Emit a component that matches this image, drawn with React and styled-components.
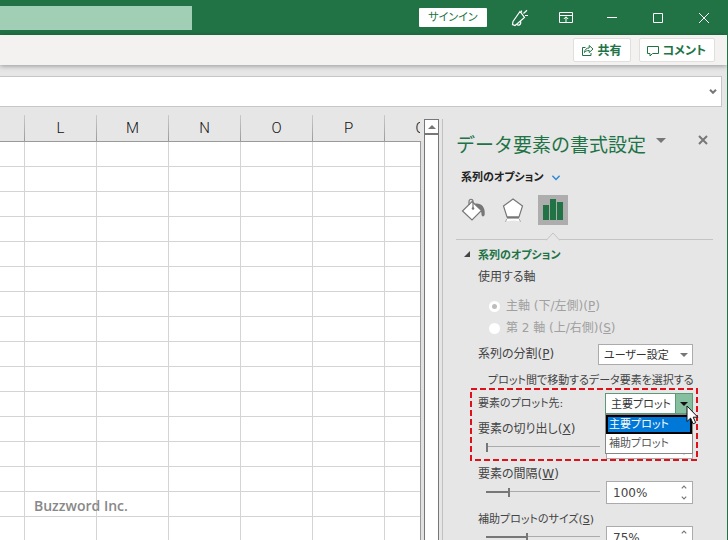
import React, { useState } from 'react'
import styled, { createGlobalStyle, css } from 'styled-components'

const green = '#217346'

const GlobalStyle = createGlobalStyle`
  * { box-sizing: border-box; }
  body {
    margin: 0;
    background: #e6e6e6;
    color: #444;
    font: 11px/20px "DejaVu Sans", "Noto Sans CJK JP", sans-serif;
    font-feature-settings: "palt";
  }
  button, input, select {
    font: inherit;
    font-feature-settings: inherit;
    color: inherit;
    margin: 0;
  }
  svg { display: block; }
`

const Window = styled.div`
  display: flex;
  flex-direction: column;
  height: 100vh;
  overflow: hidden;
  border-right: 1px solid ${green};
`

const TitleBar = styled.header`
  display: flex;
  flex: none;
  align-items: center;
  height: 35px;
  background: ${green};
`

const Search = styled.input`
  width: 192px;
  height: 24px;
  margin-right: auto;
  border: 0;
  background: #a0cfb5;
`

const SignIn = styled.button`
  width: 68px;
  height: 19px;
  margin-right: 10px;
  padding: 1px 0 0;
  border: 0;
  border-radius: 1px;
  background: #fff;
  color: ${green};
  line-height: 18px;
`

const TitleButton = styled.button`
  display: flex;
  align-items: center;
  justify-content: center;
  width: 46px;
  height: 35px;
  padding: 0;
  border: 0;
  background: none;
  color: #fff;
`

const Ribbon = styled.div`
  display: flex;
  flex: none;
  align-items: center;
  justify-content: flex-end;
  gap: 8px;
  height: 30px;
  padding-right: 12px;
  background: #f3f2f1;
  box-shadow: 0 1px 5px rgba(0, 0, 0, 0.35);
`

const RibbonButton = styled.button`
  display: flex;
  align-items: center;
  gap: 4px;
  height: 24px;
  padding: 1px 8px 0 7px;
  border: 1px solid #e1dfdd;
  border-radius: 2px;
  background: #fff;
  color: ${green};
  font-size: 12px;
  font-weight: 700;
`

const FormulaBar = styled.div`
  display: flex;
  flex: none;
  align-items: center;
  height: 31px;
  margin: 11px 5px 8px 0;
  padding-right: 4px;
  border: 1px solid #c6c6c6;
  border-left: 0;
  background: #fff;
`

const FormulaInput = styled.input`
  flex: 1;
  min-width: 0;
  border: 0;
  background: none;
`

const IconButton = styled.button`
  display: flex;
  padding: 0;
  border: 0;
  background: none;
`

const Workspace = styled.main`
  display: flex;
  flex: 1;
  min-height: 0;
`

const Sheet = styled.div`
  position: relative;
  flex: 1;
  min-width: 0;
  overflow: hidden;
`

const Grid = styled.table`
  width: 100%;
  table-layout: fixed;
  border-collapse: separate;
  border-spacing: 0;
  th {
    height: 27px;
    padding: 0;
    border-right: 1px solid;
    border-bottom: 1px solid #999;
    border-image: linear-gradient(#ccc, #999) 1;
    background: #e6e6e6;
    color: #111;
    font: 300 15px/26px Roboto, sans-serif;
  }
  td {
    height: 25px;
    padding: 0;
    border-right: 1px solid #d4d4d4;
    border-bottom: 1px solid #d4d4d4;
    background: #fff;
  }
`

const GridCol = styled.col`
  width: ${p => (p.$first ? 25 : 72)}px;
`

const SheetEdge = styled.div`
  width: 4px;
  margin-top: 26px;
  border-left: 1px solid #999;
  background: #e1e1e1;
`

const Watermark = styled.span`
  position: absolute;
  left: 34px;
  bottom: 24px;
  color: #888;
  font: 600 14px/20px "Open Sans", sans-serif;
`

const ScrollBar = styled.div`
  display: flex;
  flex-direction: column;
  width: 15px;
  margin: 4px 3px 0 0;
  border: 1px solid #777;
  border-bottom: 0;
  background: #fff;
`

const ScrollUp = styled.button`
  display: flex;
  align-items: center;
  justify-content: center;
  height: 15px;
  padding: 0;
  border: 0;
  border-bottom: 2px solid #777;
  background: #fff;
  color: #777;
`

const Pane = styled.aside`
  width: 285px;
  flex: none;
  margin-top: 4px;
  padding: 11px 14px 0 13px;
  border-left: 1px solid #c0c0c0;
`

const PaneHeader = styled.div`
  display: flex;
  height: 28px;
`

const PaneTitle = styled.h1`
  margin: 0 10px 0 0;
  color: ${green};
  font: 400 19px/28px "Noto Sans CJK JP", sans-serif;
  white-space: nowrap;
`

const PaneTools = styled.div`
  display: flex;
  flex: 1;
  align-items: center;
  justify-content: space-between;
  padding: 0 5px 8px 0;
  color: #777;
`

const OptionsMenu = styled.button`
  display: flex;
  align-items: center;
  gap: 7px;
  height: 20px;
  margin-top: 10px;
  padding: 0 0 0 5px;
  border: 0;
  background: none;
  color: #222;
  font-weight: 700;
`

const Tabs = styled.div`
  display: flex;
  gap: 10px;
  height: 44px;
  margin-top: 7px;
  padding-left: 2px;
`

const Tab = styled.button`
  display: flex;
  align-items: center;
  justify-content: center;
  width: 30px;
  height: 30px;
  padding: 0;
  border: 0;
  background: ${p => (p.$active ? '#adadad' : 'none')};
`

const Divider = styled.div`
  position: relative;
  border-top: 1px solid #c4c4c4;
  svg {
    position: absolute;
    left: 90px;
    top: -8px;
  }
`

const SectionTitle = styled.h2`
  display: flex;
  align-items: center;
  gap: 8px;
  margin: 6px 0 1px;
  padding-left: 8px;
  color: ${green};
  font-size: 11px;
  line-height: 20px;
  svg {
    margin-bottom: 4px;
  }
`

const Section = styled.section`
  padding: 0 20px 0 22px;
  white-space: nowrap;
`

const Fieldset = styled.fieldset`
  margin: 0 0 5px;
  padding: 0;
  border: 0;
  font-size: 12px;
  legend {
    padding: 0;
    margin-bottom: 8px;
  }
`

const Label = styled.label`
  font-size: ${p => (p.$small ? 11 : 12)}px;
  line-height: 21px;
`

const RadioLabel = styled.label`
  display: flex;
  align-items: center;
  gap: 6px;
  height: 22px;
  padding-left: 11px;
  color: #a0a0a0;
`

const Radio = styled.input`
  appearance: none;
  width: 11px;
  height: 11px;
  border: 3px solid #fff;
  border-radius: 50%;
  background: ${p => (p.defaultChecked ? '#bdbdbd' : '#fff')};
`

const Row = styled.div`
  position: relative;
  display: flex;
  align-items: center;
  justify-content: space-between;
  height: 21px;
`

const Hint = styled.p`
  margin: 6px 0 2px 10px;
`

const SelectBox = styled.span`
  display: grid;
  grid-template-columns: 1fr 17px;
  align-items: center;
  width: ${p => p.$width}px;
  height: 21px;
  border: 1px solid ${p => (p.$open ? '#5a9a78' : '#ababab')};
  background: #fff;
  select {
    grid-area: 1 / 1 / 2 / 3;
    appearance: none;
    height: 19px;
    padding: 1px 18px 0 5px;
    border: 0;
    background: none;
    color: #333;
    outline: 0;
  }
`

const SelectArrow = styled.span`
  grid-area: 1 / 2;
  display: flex;
  align-items: center;
  justify-content: center;
  height: 19px;
  pointer-events: none;
  color: #777;
  ${p => p.$open && css`
    border-left: 1px solid #5a9a78;
    background: #86bfa0;
    color: #111;
  `}
`

const Highlight = styled.div`
  position: relative;
`

const DashedFrame = styled.svg`
  position: absolute;
  left: -8px;
  top: -5px;
  z-index: 3;
  width: 228px;
  height: 73px;
  pointer-events: none;
`

const Menu = styled.ul`
  position: absolute;
  z-index: 1;
  top: 21px;
  right: 0;
  width: 88px;
  margin: 0;
  padding: 0;
  border: 1px solid #888;
  background: #fff;
  list-style: none;
`

const MenuItem = styled.li`
  height: 19px;
  padding: 0 1px;
  border: 2px solid ${p => (p['aria-selected'] ? '#000' : '#fff')};
  background: ${p => (p['aria-selected'] ? '#0078d7' : '#fff')};
  color: ${p => (p['aria-selected'] ? '#fff' : '#555')};
  line-height: 16px;
`

const Cursor = styled.svg`
  position: absolute;
  z-index: 4;
  top: 12px;
  right: -6px;
`

const Field = styled.div`
  display: flex;
  align-items: flex-end;
  justify-content: space-between;
  height: 45px;
`

const FieldMain = styled.div`
  display: flex;
  flex-direction: column;
  width: 122px;
  height: 40px;
`

const Slider = styled.input`
  appearance: none;
  width: 114px;
  height: 14px;
  margin-left: 8px;
  background:
    linear-gradient(#777, #777) 0 6px / ${p => p.$fill}% 2px no-repeat,
    linear-gradient(#ababab, #ababab) 0 6px / 100% 1px no-repeat;
  &::-webkit-slider-thumb {
    appearance: none;
    width: 2px;
    height: 9px;
    background: #777;
  }
`

const Spinner = styled.span`
  display: flex;
  width: 87px;
  height: 23px;
  border: 1px solid #ababab;
  background: #fff;
  input {
    flex: 1;
    min-width: 0;
    padding: 0 0 0 6px;
    border: 0;
    background: none;
    font-size: 12px;
  }
`

const SpinButtons = styled.span`
  display: flex;
  flex-direction: column;
  justify-content: space-between;
  padding: 3px 5px;
`

const Chevron = ({ size = 8, up, color = '#777', width = 1.5 }) => (
  <svg width={size} height={size / 2 + 1} viewBox="0 0 8 5" fill="none" stroke={color} strokeWidth={width}>
    <path d={up ? 'M1 4.3 4 1.2 7 4.3' : 'M1 .7 4 3.8 7 .7'} />
  </svg>
)

const Triangle = ({ size = 8, up }) => (
  <svg width={size} height={size / 2} viewBox="0 0 8 4" fill="currentColor">
    <path d={up ? 'M0 4 4 0 8 4z' : 'M0 0h8L4 4z'} />
  </svg>
)

const MegaphoneIcon = () => (
  <svg width="18" height="18" viewBox="0 0 18 18" fill="none" stroke="#fff" strokeWidth="1.2">
    <path d="M9 2.5 2 12.5 1.5 15.5 4 16.5 6.5 14.5 13.500 8.500zM6 15.2c1 1.800 4.500 1 3.600-2.800" />
    <path d="M10.500 3.500V1.500M12.500 4.500l3.500-3.300M14 6.500h3" />
  </svg>
)

const RibbonDisplayIcon = () => (
  <svg width="14" height="12" viewBox="0 0 14 12" fill="none" stroke="#fff">
    <path d="M.5.5h13v10H.5zM.5 3.5h13M7 10V5M4.8 7 7 4.8 9.2 7" />
  </svg>
)

const ShareIcon = () => (
  <svg width="13" height="13" viewBox="0 0 13 13" fill="none" stroke={green}>
    <path d="M4.500 3.500H1.500v8h8.500V9" />
    <path d="M3.500 8.500c.2-3 2-4.500 4.700-4.500V1.500l3.800 3.500-3.800 3.500V6.500C6 6.500 4.600 7 3.500 8.500z" />
  </svg>
)

const CommentIcon = () => (
  <svg width="12" height="12" viewBox="0 0 12 12" fill="none" stroke={green}>
    <path d="M.5 1.5h11v7H5.500L3 11V8.500H.5z" />
  </svg>
)

const BucketIcon = () => (
  <svg width="26" height="26" viewBox="0 0 26 26" fill="none">
    <path d="M15 6.500c6-.8 10.500 3 9.700 11-.5 2.500-3 2.500-3.200 0 .2-3-1.300-4-2.800-4z" fill="#777" />
    <path d="M12 4.500 21.500 13.500 12 23 2.500 14z" fill="#fff" stroke="#777" strokeWidth="1.2" />
    <path d="M9 8V4.500C9 1.500 13 1.500 13 4.500V11" stroke="#777" strokeWidth="1.2" />
    <circle cx="13" cy="11.5" r="1.3" fill="#777" />
  </svg>
)

const PentagonIcon = () => (
  <svg width="24" height="26" viewBox="0 0 24 26" fill="none">
    <path d="M12 2 21.500 9 18 20H6L2.500 9z" fill="#fff" stroke="#777" strokeWidth="1.2" />
    <path d="M6 20.500h12" stroke="#777" strokeWidth="2" />
    <path d="M5.5 22h13l1 3c-3-2-12-2-15 0z" fill="#fff" />
    <path d="M5.7 22 4.5 25M18.3 22l1.2 3" stroke="#aaa" />
  </svg>
)

const BarsIcon = () => (
  <svg width="20" height="22" viewBox="0 0 20 22" fill={green}>
    <path d="M0 6h6v15H0zM7 0h6v21H7zM14 3h6v18h-6z" />
  </svg>
)

const SliderField = ({ id, label, accessKey, min, max, initial, small }) => {
  const [value, setValue] = useState(initial)
  return (
    <Field>
      <FieldMain>
        <Label htmlFor={id} $small={small}>{label}(<u>{accessKey}</u>)</Label>
        <Slider
          id={id}
          type="range"
          min={min}
          max={max}
          value={value}
          $fill={(value - min) / (max - min) * 100}
          onChange={e => setValue(Number(e.target.value))}
        />
      </FieldMain>
      <Spinner>
        <input aria-label={label} value={value + '%'} onChange={e => setValue(parseInt(e.target.value, 10) || min)} />
        <SpinButtons>
          <IconButton aria-label="増やす" onClick={() => setValue(Math.min(max, value + 1))}><Chevron size={6} up /></IconButton>
          <IconButton aria-label="減らす" onClick={() => setValue(Math.max(min, value - 1))}><Chevron size={6} /></IconButton>
        </SpinButtons>
      </Spinner>
    </Field>
  )
}

const columns = ['', 'L', 'M', 'N', 'O', 'P', 'Q']
const rows = Array.from({ length: 40 }, (_, i) => i)
const plots = ['主要プロット', '補助プロット']

export default () => {
  const [plot, setPlot] = useState(plots[0])
  return (
    <Window>
      <GlobalStyle />
      <TitleBar>
        <Search aria-label="検索" />
        <SignIn>サインイン</SignIn>
        <TitleButton aria-label="新機能"><MegaphoneIcon /></TitleButton>
        <TitleButton aria-label="リボンの表示オプション"><RibbonDisplayIcon /></TitleButton>
        <TitleButton aria-label="最小化">
          <svg width="10" height="11" stroke="#fff"><path d="M0 5.5h10" /></svg>
        </TitleButton>
        <TitleButton aria-label="最大化">
          <svg width="10" height="10" fill="none" stroke="#fff"><path d="M.5.5h9v9h-9z" /></svg>
        </TitleButton>
        <TitleButton aria-label="閉じる">
          <svg width="10" height="10" stroke="#fff"><path d="M0 0 10 10M10 0 0 10" /></svg>
        </TitleButton>
      </TitleBar>
      <Ribbon>
        <RibbonButton><ShareIcon />共有</RibbonButton>
        <RibbonButton><CommentIcon />コメント</RibbonButton>
      </Ribbon>
      <FormulaBar>
        <FormulaInput aria-label="数式バー" />
        <IconButton aria-label="数式バーの展開"><Chevron width={2} /></IconButton>
      </FormulaBar>
      <Workspace>
        <Sheet>
          <Grid>
            <colgroup>{columns.map(c => <GridCol key={c} $first={!c} />)}</colgroup>
            <thead>
              <tr>{columns.map(c => <th key={c} scope="col">{c}</th>)}</tr>
            </thead>
            <tbody>
              {rows.map(r => <tr key={r}>{columns.map(c => <td key={c} />)}</tr>)}
            </tbody>
          </Grid>
          <Watermark>Buzzword Inc.</Watermark>
        </Sheet>
        <SheetEdge />
        <ScrollBar>
          <ScrollUp aria-label="上へスクロール"><Triangle up /></ScrollUp>
        </ScrollBar>
        <Pane>
          <PaneHeader>
            <PaneTitle>データ要素の書式設定</PaneTitle>
            <PaneTools>
              <IconButton aria-label="作業ウィンドウのオプション"><Triangle size={10} /></IconButton>
              <IconButton aria-label="作業ウィンドウを閉じる">
                <svg width="10" height="10" stroke="#777" strokeWidth="2"><path d="M1 1 9 9M9 1 1 9" /></svg>
              </IconButton>
            </PaneTools>
          </PaneHeader>
          <OptionsMenu>系列のオプション<Chevron size={10} color="#2b88d8" width={1.2} /></OptionsMenu>
          <Tabs>
            <Tab aria-label="塗りつぶしと線"><BucketIcon /></Tab>
            <Tab aria-label="効果"><PentagonIcon /></Tab>
            <Tab aria-label="系列のオプション" $active><BarsIcon /></Tab>
          </Tabs>
          <Divider>
            <svg width="14" height="9" fill="#e6e6e6" stroke="#c4c4c4"><path d="M0 8.5 7 1 14 8.5" /><path d="M1.5 8.5h11" stroke="#e6e6e6" /></svg>
          </Divider>
          <SectionTitle>
            <svg width="6" height="6" fill="#444"><path d="M6 0v6H0z" /></svg>
            系列のオプション
          </SectionTitle>
          <Section>
            <Fieldset>
              <legend>使用する軸</legend>
              <RadioLabel><Radio type="radio" name="axis" disabled defaultChecked /><span>主軸 (下/左側)(<u>P</u>)</span></RadioLabel>
              <RadioLabel><Radio type="radio" name="axis" disabled /><span>第 2 軸 (上/右側)(<u>S</u>)</span></RadioLabel>
            </Fieldset>
            <Row>
              <Label htmlFor="split">系列の分割(<u>P</u>)</Label>
              <SelectBox $width={95}>
                <select id="split"><option>ユーザー設定</option></select>
                <SelectArrow><Triangle /></SelectArrow>
              </SelectBox>
            </Row>
            <Hint>プロット間で移動するデータ要素を選択する</Hint>
            <Highlight>
              <Row>
                <Label htmlFor="plot" $small>要素のプロット先:</Label>
                <SelectBox $width={88} $open>
                  <select id="plot" value={plot} onChange={e => setPlot(e.target.value)}>
                    {plots.map(p => <option key={p}>{p}</option>)}
                  </select>
                  <SelectArrow $open><Triangle /></SelectArrow>
                </SelectBox>
                <Menu role="listbox" aria-label="要素のプロット先">
                  {plots.map(p => (
                    <MenuItem key={p} role="option" aria-selected={p === plot} onClick={() => setPlot(p)}>{p}</MenuItem>
                  ))}
                </Menu>
                <Cursor width="13" height="20" viewBox="0 0 13 20" fill="#fff" stroke="#111">
                  <path d="M1 1v15.5l3.6-3.4 2.5 5.7 2.6-1.1-2.5-5.5h4.6z" />
                </Cursor>
              </Row>
              <SliderField id="explosion" label="要素の切り出し" accessKey="X" min={0} max={400} initial={0} />
              <DashedFrame fill="none" stroke="#e0101a" strokeWidth="2" strokeDasharray="6 3">
                <rect x="1" y="1" width="226" height="71" />
              </DashedFrame>
            </Highlight>
            <SliderField id="gap" label="要素の間隔" accessKey="W" min={0} max={500} initial={100} />
            <SliderField id="size" label="補助プロットのサイズ" accessKey="S" min={5} max={200} initial={75} small />
          </Section>
        </Pane>
      </Workspace>
    </Window>
  )
}
